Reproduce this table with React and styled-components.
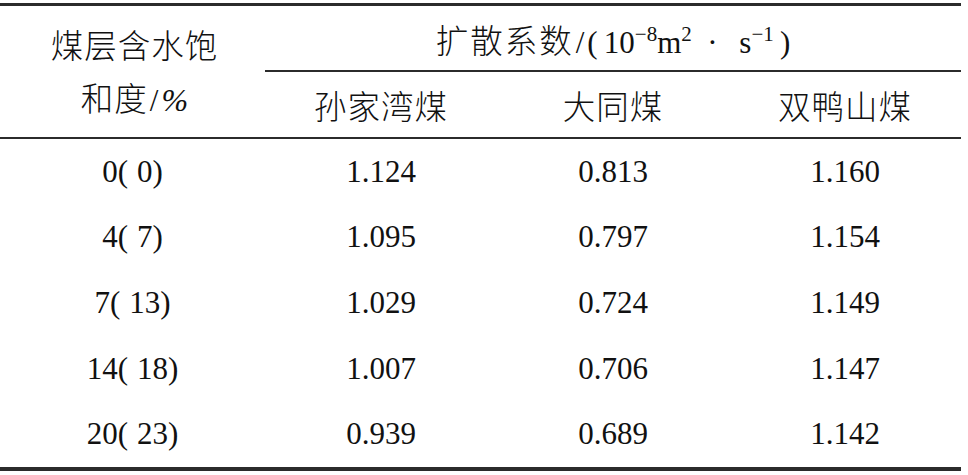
import React from "react";
import styled, { createGlobalStyle } from "styled-components";

const Global = createGlobalStyle`
  html, body { margin: 0; padding: 0; background: #fff; }
  body { font-family: "Liberation Serif", "Noto Sans CJK SC", serif; color: #111; }
`;

const Page = styled.div`
  padding-top: 3px;
  width: 968px;
`;

const Table = styled.table`
  width: 961px;
  table-layout: fixed;
  border-collapse: separate;
  border-spacing: 0;
  border-top: 3px solid #2b2b2b;
  border-bottom: 4px solid #2b2b2b;
  font-size: 31px;
`;

const HeadRow = styled.tr`
  height: ${(p) => p.$h}px;
`;

const HeadCell = styled.th`
  padding: 0;
  font-weight: 300;
  text-align: center;
  vertical-align: middle;
  font-family: "Liberation Serif", "Noto Sans CJK SC", serif;
  border-bottom: 2px solid #2b2b2b;
  white-space: nowrap;
`;

const Han = styled.span`
  font-family: "Noto Sans CJK SC", sans-serif;
  font-size: 32.5px;
  font-weight: 300;
  letter-spacing: ${(p) => p.$ls || 0}px;
`;

const StackedLabel = styled.div`
  display: flex;
  flex-direction: column;
  align-items: center;
  line-height: 53px;
  padding-left: 4px;
`;

const Slash = styled.span`
  display: inline-block;
  margin: 0 3px 0 2px;
  font-family: "Liberation Serif", serif;
`;

const Sup = styled.sup`
  font-size: 21px;
  vertical-align: 12px;
  line-height: 0;
`;

const Unit = styled.span`
  font-size: 32px;
`;

const BodyRow = styled.tr`
  height: 65.6px;
`;

const Cell = styled.td`
  padding: 0;
  text-align: center;
  vertical-align: middle;
  font-family: "Liberation Serif", serif;
`;

const rows = [
  ["0(\u2009\u200a0)", "1.124", "0.813", "1.160"],
  ["4(\u2009\u200a7)", "1.095", "0.797", "1.154"],
  ["7(\u2009\u200a13)", "1.029", "0.724", "1.149"],
  ["14(\u2009\u200a18)", "1.007", "0.706", "1.147"],
  ["20(\u2009\u200a23)", "0.939", "0.689", "1.142"],
];

export default function App() {
  return (
    <Page>
      <Global />
      <Table>
        <colgroup>
          <col style={{ width: 265 }} />
          <col style={{ width: 232 }} />
          <col style={{ width: 232 }} />
          <col style={{ width: 232 }} />
        </colgroup>
        <thead>
          <HeadRow $h={66}>
            <HeadCell rowSpan={2}>
              <StackedLabel>
                <Han $ls={1}>煤层含水饱</Han>
                <span>
                  <Han $ls={1}>和度</Han>
                  <Slash>/</Slash>
                  <Unit><i>%</i></Unit>
                </span>
              </StackedLabel>
            </HeadCell>
            <HeadCell colSpan={3}>
              <Han $ls={2}>扩散系数</Han>
              <Slash>/</Slash>(&thinsp;10<Sup>−8</Sup>m<Sup>2</Sup>&ensp;·&ensp;&thinsp;s<Sup>−1</Sup>&thinsp;)
            </HeadCell>
          </HeadRow>
          <HeadRow $h={67}>
            <HeadCell><Han $ls={1}>孙家湾煤</Han></HeadCell>
            <HeadCell><Han $ls={1}>大同煤</Han></HeadCell>
            <HeadCell><Han $ls={1}>双鸭山煤</Han></HeadCell>
          </HeadRow>
        </thead>
        <tbody>
          {rows.map((r, i) => (
            <BodyRow key={i}>
              {r.map((c, j) => (
                <Cell key={j}>{c}</Cell>
              ))}
            </BodyRow>
          ))}
        </tbody>
      </Table>
    </Page>
  );
}
